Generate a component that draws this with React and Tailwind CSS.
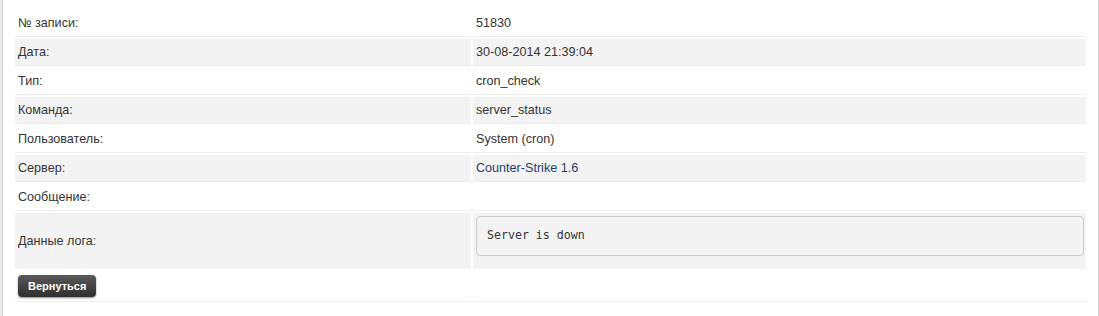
import React from 'react';

const rows = [
  { label: '№ записи:', value: '51830' },
  { label: 'Дата:', value: '30-08-2014 21:39:04' },
  { label: 'Тип:', value: 'cron_check' },
  { label: 'Команда:', value: 'server_status' },
  { label: 'Пользователь:', value: 'System (cron)' },
  { label: 'Сервер:', value: 'Counter-Strike 1.6', link: true },
  { label: 'Сообщение:', value: '' },
];

const Cell = ({ striped, className = '', children }) => (
  <div
    className={`flex items-center px-[3px] border-b border-[#ededed] ${
      striped ? 'bg-[#f3f3f3]' : 'bg-white'
    } ${className}`}
  >
    {children}
  </div>
);

const App = () => {
  return (
    <div
      className="flex w-[1099px] h-[316px] bg-[#ebebeb] pl-[2px] text-[12.6px] text-[#333]"
      style={{ fontFamily: '"Liberation Sans", Arial, sans-serif' }}
    >
      <div className="flex-1 bg-white border-x border-[#cfcfcf] px-3 pt-2">
        {rows.map((row, i) => (
          <div key={row.label} className="flex gap-[2px] mt-[2px] h-[27px]">
            <Cell striped={i % 2 === 1} className="w-[456px]">
              {row.label}
            </Cell>
            <Cell striped={i % 2 === 1} className="flex-1">
              {row.link ? <a className="text-[#1d3c70] cursor-pointer">{row.value}</a> : row.value}
            </Cell>
          </div>
        ))}

        {/* log data */}
        <div className="flex gap-[2px] mt-[2px] h-[56px]">
          <div className="w-[456px] flex items-center px-[3px] bg-[#f3f3f3]">Данные лога:</div>
          <div className="flex-1 bg-[#f3f3f3] pl-[3px] pr-[2px] pt-[3px]">
            <pre
              className="h-[40px] flex items-center px-[10px] border border-[#cccccc] rounded-[4px] bg-[#f3f3f3] text-[11.6px] text-[#333]"
              style={{ fontFamily: '"DejaVu Sans Mono", "Liberation Mono", monospace' }}
            >
              Server is down
            </pre>
          </div>
        </div>

        {/* actions */}
        <div className="flex gap-[2px] mt-[2px] h-[31px]">
          <div className="w-[456px] flex items-center px-[3px] border-b border-[#ededed]">
            <button className="h-[22px] px-[10px] rounded-[4px] bg-gradient-to-b from-[#5a5a5a] to-[#2f2f2f] text-white text-[11px] font-bold shadow-[0_1px_2px_rgba(0,0,0,0.45)]">
              Вернуться
            </button>
          </div>
          <div className="flex-1 border-b border-[#ededed]" />
        </div>
      </div>
    </div>
  );
};

export default App;
